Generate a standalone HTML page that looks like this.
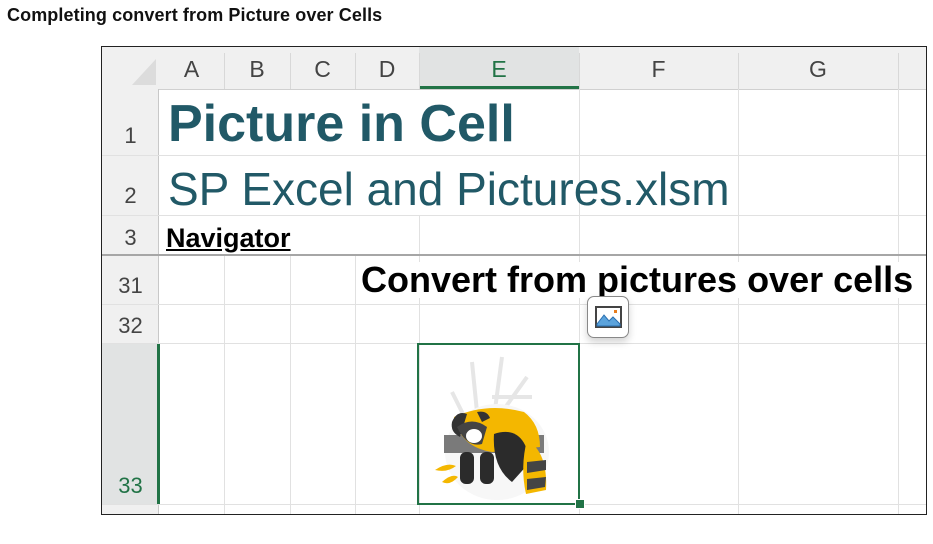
<!DOCTYPE html>
<html><head><meta charset="utf-8"><style>
body{margin:0;width:933px;height:544px;background:#fff;position:relative;overflow:hidden;font-family:"Liberation Sans",sans-serif}
.a{position:absolute}
.t{position:absolute;white-space:nowrap;line-height:1}
.vl{position:absolute;width:1px;background:#e1e1e1}
.hl{position:absolute;height:1px;background:#e1e1e1}
.hd{position:absolute;top:0;height:42px;line-height:44px;text-align:center;font-size:23px;color:#444}
.rn{position:absolute;left:0;width:57px;text-align:center;font-size:22px;color:#444;line-height:1}
</style></head><body>
<div class="t" style="left:7px;top:6px;font-size:18px;font-weight:bold;color:#111;letter-spacing:0.1px">Completing convert from Picture over Cells</div>
<div class="a" style="left:101px;top:46px;width:824px;height:467px;border:1px solid #222;overflow:hidden">
 <div class="a" style="left:0;top:0;width:824px;height:42px;background:#f0f0f0;border-bottom:1px solid #d0d0d0"></div>
 <div class="a" style="left:0;top:42px;width:56px;height:425px;background:#f0f0f0;border-right:1px solid #c8c8c8"></div>
 <svg class="a" style="left:30px;top:12px" width="24" height="26"><polygon points="24,0 24,26 0,26" fill="#dcdcdc"/></svg>
 <div class="a" style="left:317px;top:0;width:160px;height:39px;background:#e1e3e3;border-bottom:3px solid #217346"></div>
 <div class="hd" style="left:57px;width:65px">A</div>
 <div class="hd" style="left:122px;width:66px">B</div>
 <div class="hd" style="left:188px;width:65px">C</div>
 <div class="hd" style="left:253px;width:64px">D</div>
 <div class="hd" style="left:317px;width:160px;color:#217346">E</div>
 <div class="hd" style="left:477px;width:159px">F</div>
 <div class="hd" style="left:636px;width:160px">G</div>
 <div class="vl" style="left:122px;top:6px;height:36px;background:#d8d8d8"></div>
 <div class="vl" style="left:188px;top:6px;height:36px;background:#d8d8d8"></div>
 <div class="vl" style="left:253px;top:6px;height:36px;background:#d8d8d8"></div>
 <div class="vl" style="left:317px;top:6px;height:36px;background:#d8d8d8"></div>
 <div class="vl" style="left:477px;top:6px;height:36px;background:#d8d8d8"></div>
 <div class="vl" style="left:636px;top:6px;height:36px;background:#d8d8d8"></div>
 <div class="vl" style="left:796px;top:6px;height:36px;background:#d8d8d8"></div>
 <div class="vl" style="left:477px;top:42px;height:425px"></div>
 <div class="vl" style="left:636px;top:42px;height:425px"></div>
 <div class="vl" style="left:796px;top:42px;height:425px"></div>
 <div class="vl" style="left:317px;top:168px;height:299px"></div>
 <div class="vl" style="left:122px;top:208px;height:259px"></div>
 <div class="vl" style="left:188px;top:208px;height:259px"></div>
 <div class="vl" style="left:253px;top:208px;height:259px"></div>
 <div class="hl" style="left:0;top:108px;width:824px"></div>
 <div class="hl" style="left:0;top:168px;width:824px"></div>
 <div class="a" style="left:0;top:207px;width:824px;height:2px;background:#a6a6a6"></div>
 <div class="hl" style="left:0;top:257px;width:824px"></div>
 <div class="hl" style="left:0;top:296px;width:824px"></div>
 <div class="hl" style="left:0;top:457px;width:824px"></div>
 <div class="a" style="left:0;top:297px;width:55px;height:160px;background:#e1e3e3;border-right:3px solid #217346"></div>
 <div class="rn" style="top:78px">1</div>
 <div class="rn" style="top:138px">2</div>
 <div class="rn" style="top:180px">3</div>
 <div class="rn" style="top:228px">31</div>
 <div class="rn" style="top:268px">32</div>
 <div class="rn" style="top:428px;color:#217346">33</div>
 <div class="t" style="left:66px;top:51px;font-size:52px;font-weight:bold;color:#215967">Picture in Cell</div>
 <div class="t" style="left:66px;top:119px;font-size:46px;color:#215967">SP Excel and Pictures.xlsm</div>
 <div class="t" style="left:64px;top:178px;font-size:27px;font-weight:bold;color:#000;text-decoration:underline">Navigator</div>
 <div class="t" style="left:259px;top:215px;font-size:36px;font-weight:bold;color:#000;background:#fff">Convert from pictures over cells</div>
 <div class="a" style="left:315px;top:296px;width:159px;height:158px;border:2px solid #217346"></div>
 <div class="a" style="left:473px;top:452px;width:8px;height:8px;background:#217346;border:1px solid #fff"></div>
 <svg class="a" style="left:330px;top:305px" width="130" height="150" viewBox="0 0 130 150">
  <g stroke="#e6e6e6" stroke-width="4" fill="none"><path d="M40 10 L45 60"/><path d="M70 5 L62 65"/><path d="M95 25 L70 60"/><path d="M20 40 L35 70"/><path d="M60 45 L100 45"/></g>
  <ellipse cx="65" cy="100" rx="52" ry="48" fill="#f7f7f7"/>
  <rect x="12" y="83" width="100" height="18" fill="#7a7a7a"/>
  <path d="M22 65 Q55 50 92 60 Q108 72 108 95 L60 100 Q28 95 22 65Z" fill="#f4b700"/>
  <path d="M20 70 Q25 58 35 62 L28 85 Q18 80 20 70Z" fill="#333"/>
  <path d="M45 60 Q55 58 58 66 L50 70Z" fill="#333"/>
  <path d="M25 75 Q40 64 55 75 L50 92 Q35 96 25 75Z" fill="#444"/>
  <ellipse cx="42" cy="84" rx="8" ry="7" fill="#fff"/>
  <path d="M62 82 Q92 72 98 110 L80 130 Q60 115 62 82Z" fill="#2b2b2b"/>
  <rect x="28" y="100" width="14" height="32" rx="6" fill="#2b2b2b"/>
  <rect x="48" y="100" width="14" height="32" rx="6" fill="#2b2b2b"/>
  <path d="M95 88 Q116 100 114 138 L94 142 Q88 115 95 88Z" fill="#f4b700"/>
  <path d="M95 110 L114 108 L114 118 L95 121Z M95 127 L114 125 L113 135 L95 138Z" fill="#444"/>
  <path d="M3 118 Q15 110 24 114 Q15 121 3 118Z M10 130 Q20 121 26 125 Q18 134 10 130Z" fill="#f4b700"/>
 </svg>
 <div class="a" style="left:485px;top:249px;width:40px;height:40px;border:1px solid #888;border-radius:7px;background:#fff;box-shadow:0 4px 8px rgba(0,0,0,0.18)">
  <svg class="a" style="left:7px;top:9px" width="27" height="22" viewBox="0 0 27 22"><rect x="1" y="1" width="25" height="20" fill="#fff" stroke="#444" stroke-width="2"/><path d="M2 18 L9 9 L14 15 L18 11 L25 18 L25 20 L2 20Z" fill="#5ba3dc" stroke="#2a6fb0" stroke-width="1"/><rect x="19" y="4" width="3" height="3" fill="#e87d1e"/></svg>
 </div>
</div>
</body></html>
